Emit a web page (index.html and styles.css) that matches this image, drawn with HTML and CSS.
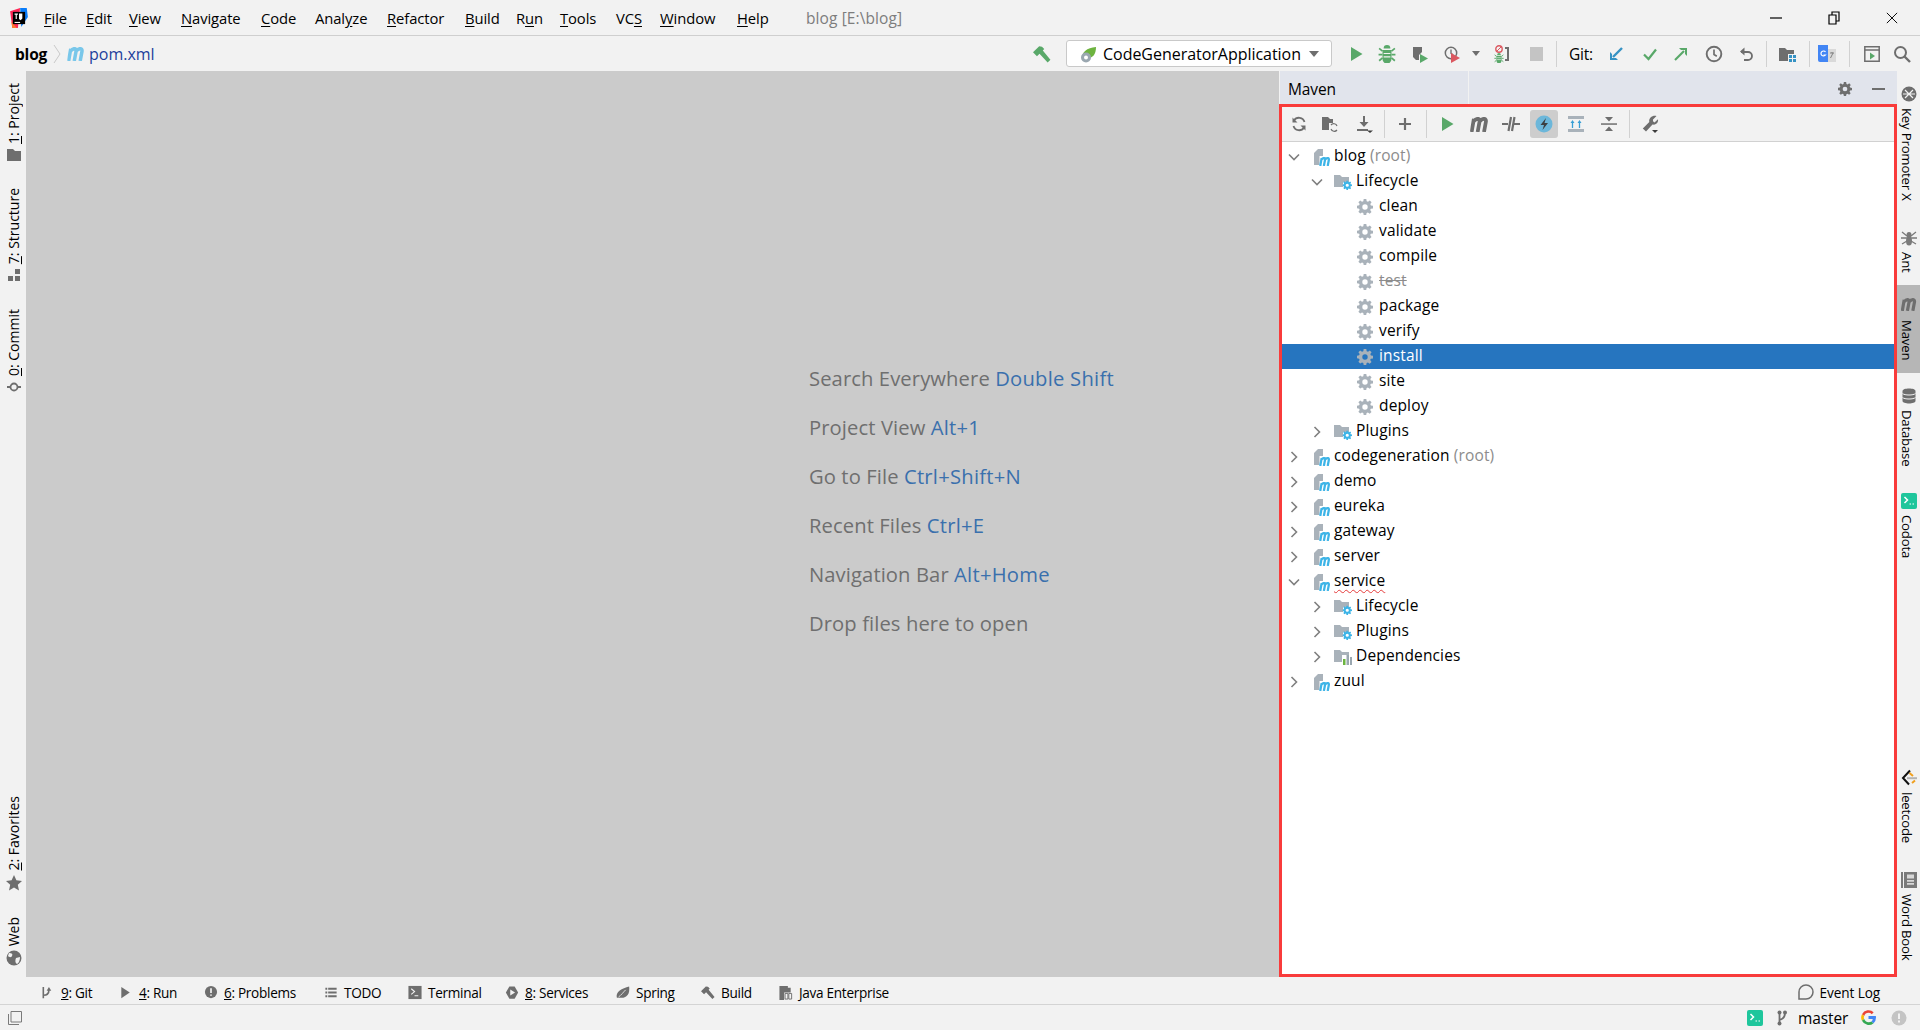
FILE: index.html
```html
<!DOCTYPE html>
<html lang="en">
<head>
<meta charset="utf-8">
<title>blog [E:\blog]</title>
<link rel="stylesheet" href="styles.css">
</head>
<body>
<svg class="sprite" aria-hidden="true">
  <symbol id="mm" viewBox="0 0 10 8"><path d="M.8 8 2 1M1.800 2.400C3.500.4 5.400.5 5 2.600L4 8M5 2.400C6.700.4 8.800.5 8.400 2.600L7.400 8" fill="none" stroke="currentColor" stroke-width="2"/></symbol>
  <symbol id="gear" viewBox="0 0 16 16"><path fill="currentColor" fill-rule="evenodd" d="M6.700 0h2.600l.4 2.200 1.300.6L12.800 1.500l1.800 1.800-1.300 1.800.6 1.300 2.100.4v2.600l-2.200.4-.6 1.300 1.300 1.800-1.800 1.800-1.800-1.300-1.300.6-.4 2.100H6.700l-.4-2.200-1.300-.5-1.800 1.200-1.800-1.800 1.300-1.800-.6-1.300L0 9.300V6.700l2.100-.4.6-1.300-1.300-1.800 1.800-1.800L5 2.800l1.300-.6zM8 5.300a2.700 2.700 0 1 0 0 5.400 2.700 2.700 0 0 0 0-5.400z"/></symbol>
  <symbol id="module" viewBox="0 0 18 18"><path fill="#a9b2ba" d="M1 5 5 1h5v7H6.500v9H1z"/><use href="#mm" x="6" y="9" width="12" height="9" color="#3db4e7"/></symbol>
  <symbol id="life" viewBox="0 0 18 18"><path fill="#a9b2ba" d="M0 2h6l2 2h7v5H9v5H0z"/><use href="#gear" x="8.500" y="7.500" width="9.500" height="9.500" color="#3db4e7"/></symbol>
  <symbol id="deps" viewBox="0 0 18 18"><path fill="#a9b2ba" d="M0 2h6l2 2h7v3H8v7H0z"/><path fill="#6bb53f" d="M9 11h2.500v6H9z"/><path fill="#9aa7b0" d="M12.500 7H15v10h-2.500zM16 9h2v8h-2z"/></symbol>
  <symbol id="chev-r" viewBox="0 0 12 12"><path d="M3.500 1 8.500 6l-5 5" fill="none" stroke="#7f7f7f" stroke-width="1.600"/></symbol>
  <symbol id="chev-d" viewBox="0 0 12 12"><path d="M1 3.500 6 8.500l5-5" fill="none" stroke="#7f7f7f" stroke-width="1.600"/></symbol>
  <symbol id="play" viewBox="0 0 16 16"><path fill="currentColor" d="M3 1 14.500 8 3 15z"/></symbol>
  <symbol id="bug" viewBox="0 0 16 16"><path fill="currentColor" d="M5 3a3 3 0 0 1 6 0zM4 4.500h8v8a4 4 0 0 1-8 0z"/><path d="M1 3l3 2.500M15 3l-3 2.500M.5 8.500H4M15.500 8.500H12M1 14l3-2.500M15 14l-3-2.500" stroke="currentColor" stroke-width="1.500"/><path d="M5 7.500h6M5 10.500h6" stroke="#f2f2f2"/></symbol>
  <symbol id="hammer" viewBox="0 0 16 16"><path fill="currentColor" d="M0 6.500 5.500 1l2.500.5 2 2-1.300 1.300L15.500 13 13 15.500 5.800 7.700 3.500 10z"/></symbol>
  <symbol id="clock" viewBox="0 0 16 16"><circle cx="8" cy="8" r="6.500" fill="none" stroke="currentColor" stroke-width="1.700"/><path d="M8 4v4.500l2.500 1.500" fill="none" stroke="currentColor" stroke-width="1.500"/></symbol>
</svg>

<header class="titlebar">
  <svg class="logo" viewBox="0 0 16 18" aria-hidden="true"><path fill="#fe2857" d="M0 3 9 0l-2 18H2z"/><path fill="#fe7a2e" d="M1 12l5 6H2z"/><path fill="#087cfa" d="M9 0h6l1 8-6 9z"/><path d="M2.500 3.500h11v11h-11z" fill="#000"/><path d="M4 12.500h5v1H4z" fill="#fff"/><path d="M4 5h3v1H6v4H5V6H4zM8 5h3v4.500L9.500 11 8 10z" fill="#fff"/></svg>
  <nav class="menu">
    <span><u>F</u>ile</span><span><u>E</u>dit</span><span><u>V</u>iew</span><span><u>N</u>avigate</span><span><u>C</u>ode</span><span>Anal<u>y</u>ze</span><span><u>R</u>efactor</span><span><u>B</u>uild</span><span>R<u>u</u>n</span><span><u>T</u>ools</span><span>VC<u>S</u></span><span><u>W</u>indow</span><span><u>H</u>elp</span>
  </nav>
  <span class="wintitle">blog [E:\blog]</span>
  <div class="winctl">
    <svg viewBox="0 0 12 12" aria-hidden="true"><path d="M0 6h12" stroke="#000" stroke-width="1.200"/></svg>
    <svg viewBox="0 0 12 14" aria-hidden="true"><path d="M1 4h7v9H1zM4 4V1h7v9H8" fill="none" stroke="#000" stroke-width="1.200"/></svg>
    <svg viewBox="0 0 14 14" aria-hidden="true"><path d="M1 1l12 12M13 1 1 13" stroke="#000" stroke-width="1.100"/></svg>
  </div>
</header>

<div class="navbar">
  <div class="crumbs">
    <b class="crumb-root">blog</b>
    <svg class="crumb-sep" viewBox="0 0 8 20" aria-hidden="true"><path d="M1 1l6 9-6 9" fill="none" stroke="#c9c9c9"/></svg>
    <svg class="crumb-m" viewBox="0 0 10 8" aria-hidden="true"><use href="#mm"/></svg>
    <span class="crumb-file">pom.xml</span>
  </div>
  <div class="tools">
    <span class="cell hammer-cell"><svg class="ic18 green" viewBox="0 0 16 16" aria-hidden="true"><use href="#hammer"/></svg></span>
    <div class="combo">
      <svg class="combo-ic" viewBox="0 0 18 18" aria-hidden="true"><path fill="#6db33f" d="M3 13C1 7 7 3 16 2c0 7-3 11-8 11z"/><circle cx="6" cy="12.500" r="5" fill="#9aa7b0"/><circle cx="6" cy="12.500" r="2" fill="#fff"/></svg>
      <span class="combo-text">CodeGeneratorApplication</span>
      <svg class="caret" viewBox="0 0 10 6" aria-hidden="true"><path d="M0 0h10L5 6z" fill="#6e6e6e"/></svg>
    </div>
    <div class="iconrow">
      <span class="cell"><svg class="ic16 green" viewBox="0 0 16 16" aria-hidden="true"><use href="#play"/></svg></span>
      <span class="cell"><svg class="ic18 green" viewBox="0 0 16 16" aria-hidden="true"><use href="#bug"/></svg></span>
      <span class="cell"><svg class="ic18" viewBox="0 0 18 18" aria-hidden="true"><path d="M2 2h9v5l-3 3v5H5l-3-3z" fill="#6e6e6e"/><path d="M9 9l8 4.500-8 4.500z" fill="#59a869"/></svg></span>
      <span class="cell"><svg class="ic18" viewBox="0 0 18 18" aria-hidden="true"><use href="#clock" width="14" height="14" color="#6e6e6e" x="0" y="1"/><path d="M7 8l9 5-9 5z" fill="#db5860"/></svg></span>
      <span class="cell"><svg class="mini" viewBox="0 0 8 5" aria-hidden="true"><path d="M0 0h8L4 5z" fill="#6e6e6e"/></svg></span>
      <span class="cell"><svg class="ic18" viewBox="0 0 18 18" aria-hidden="true"><circle cx="6" cy="4" r="3.200" fill="none" stroke="#db5860" stroke-width="1.400"/><path d="M4 6l4-4" stroke="#db5860"/><use href="#bug" x="1" y="8" width="10" height="10" color="#59a869"/><path d="M12 2h4v14h-4v-2h2V4h-2z" fill="#6e6e6e"/></svg></span>
      <span class="cell"><i class="stop"></i></span>
      <span class="cell"><i class="vsep"></i></span>
      <span class="gitlabel">Git:</span>
      <span class="cell"><svg class="ic16" viewBox="0 0 16 16" aria-hidden="true"><path d="M14 2 5 11" stroke="#3592c4" stroke-width="2.400"/><path d="M2 6v8h8l-2-2H4V8z" fill="#3592c4"/></svg></span>
      <span class="cell"><svg class="ic16" viewBox="0 0 16 16" aria-hidden="true"><path d="M2 8.500 6.500 13 14 3.500" fill="none" stroke="#59a869" stroke-width="2.200"/></svg></span>
      <span class="cell"><svg class="ic16" viewBox="0 0 16 16" aria-hidden="true"><path d="M2 14 11 5" stroke="#59a869" stroke-width="2.200"/><path d="M6 2h8v8l-2-2V4H8z" fill="#59a869"/></svg></span>
      <span class="cell"><svg class="ic18 grey" viewBox="0 0 16 16" aria-hidden="true"><use href="#clock"/></svg></span>
      <span class="cell"><svg class="ic16" viewBox="0 0 16 16" aria-hidden="true"><path d="M3 6h7a3.500 3.500 0 0 1 0 8H6" fill="none" stroke="#6e6e6e" stroke-width="1.800"/><path d="M6.500 1.500v8L2 5.500z" fill="#6e6e6e"/></svg></span>
      <span class="cell"><i class="vsep"></i></span>
      <span class="cell"><svg class="ic18" viewBox="0 0 18 18" aria-hidden="true"><path d="M0 3h6l2 2h7v4H9v7H0z" fill="#6e6e6e"/><path d="M10 10h3v3h-3zM14 10h3v3h-3zM10 14h3v3h-3zM14 14h3v3h-3z" fill="#3592c4"/></svg></span>
      <span class="cell"><i class="vsep"></i></span>
      <span class="cell"><svg class="ic20" viewBox="0 0 20 20" aria-hidden="true"><path d="M1 1h10v17H3a2 2 0 0 1-2-2z" fill="#4285f4"/><path d="M11 5h8v13h-8z" fill="#d9d9d9"/><path d="M8.500 8A2.500 2.500 0 1 0 8.500 11H6.500" fill="none" stroke="#fff" stroke-width="1.200"/><path d="M13 9h4M15 8v1M13.500 14l2.500-5" stroke="#808080"/></svg></span>
      <span class="cell"><i class="vsep"></i></span>
      <span class="cell"><svg class="ic18" viewBox="0 0 18 18" aria-hidden="true"><path d="M1.800 1.800h14.400v14.400H1.800z" fill="none" stroke="#6e6e6e" stroke-width="1.500"/><path d="M1.800 5h14.400" stroke="#6e6e6e" stroke-width="1.500"/><path d="M7 7.500l5 3.500-5 3.500z" fill="#59a869"/></svg></span>
      <span class="cell"><svg class="ic18" viewBox="0 0 18 18" aria-hidden="true"><circle cx="7.500" cy="7.500" r="5.500" fill="none" stroke="#6e6e6e" stroke-width="2"/><path d="M11.500 11.500 17 17" stroke="#6e6e6e" stroke-width="2.400"/></svg></span>
    </div>
  </div>
</div>

<main class="main">
  <aside class="lstripe">
    <div class="lgroup-top">
      <div class="lbtn"><svg class="ic14" viewBox="0 0 14 14" aria-hidden="true"><path d="M0 1h6l2 2h6v10H0z" fill="#6e6e6e"/></svg><span class="vt"><u>1</u>: Project</span></div>
      <div class="lbtn"><svg class="ic14" viewBox="0 0 14 14" aria-hidden="true"><path d="M8 1h5v5H8zM1 8h5v5H1zM8 8h5v5H8z" fill="#6e6e6e"/></svg><span class="vt"><u>7</u>: Structure</span></div>
      <div class="lbtn"><svg class="ic14" viewBox="0 0 14 14" aria-hidden="true"><circle cx="7" cy="7" r="3.500" fill="none" stroke="#6e6e6e" stroke-width="1.800"/><path d="M0 7h3.500M10.500 7H14" stroke="#6e6e6e" stroke-width="1.800"/></svg><span class="vt"><u>0</u>: Commit</span></div>
    </div>
    <div class="lgroup-bot">
      <div class="lbtn"><svg class="ic16" viewBox="0 0 16 16" aria-hidden="true"><path d="M8 0l2.400 5.300 5.600.6-4.200 3.800 1.200 5.700L8 12.500 3 15.400l1.200-5.700L0 5.900l5.600-.6z" fill="#6e6e6e"/></svg><span class="vt"><u>2</u>: Favorites</span></div>
      <div class="lbtn"><svg class="ic16" viewBox="0 0 16 16" aria-hidden="true"><circle cx="8" cy="8" r="7.500" fill="#6e6e6e"/><path d="M3 3c3 0 4 1 3 3S3 7 2 6zM10 8l4-1c0 3-1 6-3 7-2-1-2-4-1-6z" fill="#f2f2f2"/></svg><span class="vt">Web</span></div>
    </div>
  </aside>

  <section class="editor">
    <p class="hint">Search Everywhere <em>Double Shift</em></p>
    <p class="hint">Project View <em>Alt+1</em></p>
    <p class="hint">Go to File <em>Ctrl+Shift+N</em></p>
    <p class="hint">Recent Files <em>Ctrl+E</em></p>
    <p class="hint">Navigation Bar <em>Alt+Home</em></p>
    <p class="hint">Drop files here to open</p>
  </section>

  <section class="panel">
    <div class="panel-head">
      <span class="panel-title">Maven</span>
      <svg class="head-gear" viewBox="0 0 16 16" aria-hidden="true"><use href="#gear"/></svg>
      <i class="head-min"></i>
    </div>
    <div class="panel-box">
      <div class="mvn-tools">
        <span class="cell"><svg class="ic16" viewBox="0 0 16 16" aria-hidden="true"><path d="M13.500 6A5.800 5.800 0 0 0 3 4.500M2.500 10A5.800 5.800 0 0 0 13 11.500" fill="none" stroke="#6e6e6e" stroke-width="1.800"/><path d="M1.500 1.500v5h5zM14.500 14.500v-5h-5z" fill="#6e6e6e"/></svg></span>
        <span class="cell"><svg class="ic18" viewBox="0 0 18 18" aria-hidden="true"><path d="M1 2h6l2 2h3v4H8v7H1z" fill="#6e6e6e"/><path d="M16 11a3.500 3.500 0 0 0-6-1M10 14a3.500 3.500 0 0 0 6 1" fill="none" stroke="#6e6e6e" stroke-width="1.200"/></svg></span>
        <span class="cell"><svg class="ic18" viewBox="0 0 18 18" aria-hidden="true"><path d="M8 1v9" stroke="#6e6e6e" stroke-width="2"/><path d="M3.500 7h9L8 12zM1 14h11v2H1z" fill="#6e6e6e"/><path d="M11 15.500h6l-3 2.500z" fill="#3c3c3c"/></svg></span>
        <span class="cell"><i class="vsep tall"></i></span>
        <span class="cell"><svg class="ic14" viewBox="0 0 14 14" aria-hidden="true"><path d="M7 1v12M1 7h12" stroke="#6e6e6e" stroke-width="2.200"/></svg></span>
        <span class="cell"><i class="vsep tall"></i></span>
        <span class="cell"><svg class="ic16 green" viewBox="0 0 16 16" aria-hidden="true"><use href="#play"/></svg></span>
        <span class="cell"><svg class="mbig" viewBox="0 0 10 8" aria-hidden="true"><use href="#mm"/></svg></span>
        <span class="cell"><svg class="ic18" viewBox="0 0 18 18" aria-hidden="true"><path d="M0 9h6M12 9h6" stroke="#6e6e6e" stroke-width="2"/><path d="M6.500 16 9 2M10 16l2.500-14" stroke="#6e6e6e" stroke-width="2.200"/></svg></span>
        <span class="cell on"><svg class="ic18" viewBox="0 0 18 18" aria-hidden="true"><circle cx="9" cy="9" r="8.500" fill="#6cb7da"/><path d="M11 3 5.500 10H9l-1.500 5L13 8H9.500z" fill="#3c3f41"/></svg></span>
        <span class="cell"><svg class="ic18" viewBox="0 0 18 18" aria-hidden="true"><path d="M1 1h16v3H1zM1 14h16v3H1z" fill="#a9b2ba"/><path d="M5.500 13V7M12.500 13V7" stroke="#389fd6" stroke-width="1.300"/><path d="M3.500 8l2-3 2 3zM10.500 8l2-3 2 3z" fill="#389fd6"/></svg></span>
        <span class="cell"><svg class="ic16" viewBox="0 0 16 16" aria-hidden="true"><path d="M0 7.300h16v1.500H0z" fill="#6e6e6e"/><path d="M4 1h8L8 5.500zM8 10.500l4 4.500H4z" fill="#6e6e6e"/></svg></span>
        <span class="cell"><i class="vsep tall"></i></span>
        <span class="cell"><svg class="ic18" viewBox="0 0 18 18" aria-hidden="true"><path d="M15.500 1 12 4.500v1.800l1.500 1.200 3.500-3.200c.5 3-1.500 6-5.500 5.200L5 16.500 1.800 13.500 8.300 7C7.500 3 11.500 0 15.500 1z" fill="#6e6e6e"/><path d="M11 15h6l-3 3z" fill="#3c3c3c"/></svg></span>
      </div>
      <div class="tree">
        <div class="row d0"><svg class="chev" viewBox="0 0 12 12" aria-hidden="true"><use href="#chev-d"/></svg><svg class="ti mod" viewBox="0 0 18 18" aria-hidden="true"><use href="#module"/></svg><span>blog <span class="root">(root)</span></span></div>
        <div class="row d1"><svg class="chev" viewBox="0 0 12 12" aria-hidden="true"><use href="#chev-d"/></svg><svg class="ti fold" viewBox="0 0 18 18" aria-hidden="true"><use href="#life"/></svg><span>Lifecycle</span></div>
        <div class="row d2"><svg class="ti goal" viewBox="0 0 16 16" aria-hidden="true"><use href="#gear"/></svg><span>clean</span></div>
        <div class="row d2"><svg class="ti goal" viewBox="0 0 16 16" aria-hidden="true"><use href="#gear"/></svg><span>validate</span></div>
        <div class="row d2"><svg class="ti goal" viewBox="0 0 16 16" aria-hidden="true"><use href="#gear"/></svg><span>compile</span></div>
        <div class="row d2"><svg class="ti goal" viewBox="0 0 16 16" aria-hidden="true"><use href="#gear"/></svg><span class="skip">test</span></div>
        <div class="row d2"><svg class="ti goal" viewBox="0 0 16 16" aria-hidden="true"><use href="#gear"/></svg><span>package</span></div>
        <div class="row d2"><svg class="ti goal" viewBox="0 0 16 16" aria-hidden="true"><use href="#gear"/></svg><span>verify</span></div>
        <div class="row d2 selected"><svg class="ti goal" viewBox="0 0 16 16" aria-hidden="true"><use href="#gear"/></svg><span>install</span></div>
        <div class="row d2"><svg class="ti goal" viewBox="0 0 16 16" aria-hidden="true"><use href="#gear"/></svg><span>site</span></div>
        <div class="row d2"><svg class="ti goal" viewBox="0 0 16 16" aria-hidden="true"><use href="#gear"/></svg><span>deploy</span></div>
        <div class="row d1"><svg class="chev" viewBox="0 0 12 12" aria-hidden="true"><use href="#chev-r"/></svg><svg class="ti fold" viewBox="0 0 18 18" aria-hidden="true"><use href="#life"/></svg><span>Plugins</span></div>
        <div class="row d0"><svg class="chev" viewBox="0 0 12 12" aria-hidden="true"><use href="#chev-r"/></svg><svg class="ti mod" viewBox="0 0 18 18" aria-hidden="true"><use href="#module"/></svg><span>codegeneration <span class="root">(root)</span></span></div>
        <div class="row d0"><svg class="chev" viewBox="0 0 12 12" aria-hidden="true"><use href="#chev-r"/></svg><svg class="ti mod" viewBox="0 0 18 18" aria-hidden="true"><use href="#module"/></svg><span>demo</span></div>
        <div class="row d0"><svg class="chev" viewBox="0 0 12 12" aria-hidden="true"><use href="#chev-r"/></svg><svg class="ti mod" viewBox="0 0 18 18" aria-hidden="true"><use href="#module"/></svg><span>eureka</span></div>
        <div class="row d0"><svg class="chev" viewBox="0 0 12 12" aria-hidden="true"><use href="#chev-r"/></svg><svg class="ti mod" viewBox="0 0 18 18" aria-hidden="true"><use href="#module"/></svg><span>gateway</span></div>
        <div class="row d0"><svg class="chev" viewBox="0 0 12 12" aria-hidden="true"><use href="#chev-r"/></svg><svg class="ti mod" viewBox="0 0 18 18" aria-hidden="true"><use href="#module"/></svg><span>server</span></div>
        <div class="row d0"><svg class="chev" viewBox="0 0 12 12" aria-hidden="true"><use href="#chev-d"/></svg><svg class="ti mod" viewBox="0 0 18 18" aria-hidden="true"><use href="#module"/></svg><span class="squiggle">service</span></div>
        <div class="row d1"><svg class="chev" viewBox="0 0 12 12" aria-hidden="true"><use href="#chev-r"/></svg><svg class="ti fold" viewBox="0 0 18 18" aria-hidden="true"><use href="#life"/></svg><span>Lifecycle</span></div>
        <div class="row d1"><svg class="chev" viewBox="0 0 12 12" aria-hidden="true"><use href="#chev-r"/></svg><svg class="ti fold" viewBox="0 0 18 18" aria-hidden="true"><use href="#life"/></svg><span>Plugins</span></div>
        <div class="row d1"><svg class="chev" viewBox="0 0 12 12" aria-hidden="true"><use href="#chev-r"/></svg><svg class="ti fold" viewBox="0 0 18 18" aria-hidden="true"><use href="#deps"/></svg><span>Dependencies</span></div>
        <div class="row d0"><svg class="chev" viewBox="0 0 12 12" aria-hidden="true"><use href="#chev-r"/></svg><svg class="ti mod" viewBox="0 0 18 18" aria-hidden="true"><use href="#module"/></svg><span>zuul</span></div>
      </div>
    </div>
  </section>

  <aside class="rstripe">
    <div class="rgroup-top">
      <div class="rbtn"><svg class="ic16" viewBox="0 0 16 16" aria-hidden="true"><circle cx="8" cy="8" r="7.500" fill="#6e6e6e"/><path d="M4 4l8 8M12 4l-8 8M2 8h12" stroke="#f2f2f2" stroke-width="1.200"/></svg><span class="vr">Key Promoter X</span></div>
      <div class="rbtn"><svg class="ic16" viewBox="0 0 16 16" aria-hidden="true"><ellipse cx="8" cy="5" rx="2.500" ry="3" fill="#7a7a7a"/><ellipse cx="8" cy="11" rx="3" ry="4.500" fill="#7a7a7a"/><path d="M1 2l5 4M15 2l-5 4M0 8h16M1 14l5-3M15 14l-5-3" stroke="#7a7a7a" stroke-width="1.300"/></svg><span class="vr">Ant</span></div>
      <div class="rbtn active"><svg class="mstripe" viewBox="0 0 10 8" aria-hidden="true"><use href="#mm"/></svg><span class="vr">Maven</span></div>
      <div class="rbtn db"><svg class="ic16" viewBox="0 0 16 16" aria-hidden="true"><path d="M1.500 3c0-3.300 13-3.300 13 0v10c0 3.300-13 3.300-13 0z" fill="#6e6e6e"/><path d="M1.500 5.500c2 2 11 2 13 0M1.500 9.500c2 2 11 2 13 0" fill="none" stroke="#f2f2f2"/></svg><span class="vr">Database</span></div>
      <div class="rbtn"><svg class="ic16" viewBox="0 0 16 16" aria-hidden="true"><rect width="16" height="16" rx="2" fill="#1fc69c"/><path d="M3.500 4l3 3-3 3" fill="none" stroke="#fff" stroke-width="1.500"/><path d="M8.500 11h1.500M11.500 11H13" stroke="#fff" stroke-width="1.200"/></svg><span class="vr">Codota</span></div>
    </div>
    <div class="rgroup-bot">
      <div class="rbtn"><svg class="ic16" viewBox="0 0 16 16" aria-hidden="true"><path d="M9 .5 2 8l6 6.500" fill="none" stroke="#111" stroke-width="2"/><path d="M6 8.200h10" stroke="#b3b3b3" stroke-width="2"/><path d="M8.500 3l3.500 3M11 13l3-2.500" stroke="#f0a020" stroke-width="2"/></svg><span class="vr">leetcode</span></div>
      <div class="rbtn"><svg class="ic16" viewBox="0 0 16 16" aria-hidden="true"><path d="M0 0h2v16H0zM3 0h13v16H3z" fill="#7a7a7a"/><path d="M6 2.500h7v4H6zM6 8h7v1.800H6zM6 11h7v1.800H6z" fill="#d8d8d8"/></svg><span class="vr">Word Book</span></div>
    </div>
  </aside>
</main>

<div class="toolwin">
  <div class="toolwin-items">
    <div class="tw"><svg viewBox="0 0 14 16" aria-hidden="true"><path d="M2 2v12M2 11c4 0 6-2 6-6" fill="none" stroke="#6e6e6e" stroke-width="1.700"/><path d="M5.500 6 8 2l2.500 4z" fill="#6e6e6e"/></svg><span><u>9</u>: Git</span></div>
    <div class="tw"><svg viewBox="0 0 14 16" aria-hidden="true"><path d="M2 2l9 6-9 6z" fill="#6e6e6e"/></svg><span><u>4</u>: Run</span></div>
    <div class="tw"><svg viewBox="0 0 14 16" aria-hidden="true"><circle cx="7" cy="7.500" r="6.500" fill="#6e6e6e"/><path d="M7 3.500v5M7 10v1.500" stroke="#f2f2f2" stroke-width="1.800"/></svg><span><u>6</u>: Problems</span></div>
    <div class="tw"><svg viewBox="0 0 14 16" aria-hidden="true"><path d="M1 3h2v2H1zM4 3h9v2H4zM1 7h2v2H1zM4 7h9v2H4zM1 11h2v2H1zM4 11h9v2H4z" fill="#6e6e6e"/></svg><span>TODO</span></div>
    <div class="tw"><svg viewBox="0 0 14 16" aria-hidden="true"><path d="M0 1h14v14H0z" fill="#6e6e6e"/><path d="M3 4l3.500 3L3 10M6.500 11.500h4" fill="none" stroke="#f2f2f2" stroke-width="1.200"/></svg><span>Terminal</span></div>
    <div class="tw"><svg viewBox="0 0 16 16" aria-hidden="true"><path d="M5 1h6l4 7-4 7H5L1 8z" fill="#6e6e6e"/><path d="M6 4.500l5.500 3.500L6 11.500z" fill="#f2f2f2"/></svg><span><u>8</u>: Services</span></div>
    <div class="tw"><svg viewBox="0 0 16 16" aria-hidden="true"><path d="M1 14C-1 7 7 3 15 1c1 8-2 13-9 13z" fill="#6e6e6e"/><path d="M3 13c3-2 5-5 8-8" stroke="#f2f2f2"/></svg><span>Spring</span></div>
    <div class="tw"><svg viewBox="0 0 16 16" aria-hidden="true"><use href="#hammer" color="#6e6e6e"/></svg><span>Build</span></div>
    <div class="tw"><svg viewBox="0 0 14 16" aria-hidden="true"><path d="M0 1h9v2h3v13H0z" fill="#6e6e6e"/><path d="M5 8h8v8H5z" fill="#f2f2f2"/><path d="M6 9h3v6H6zM10 9h3v6h-3z" fill="none" stroke="#6e6e6e"/></svg><span>Java Enterprise</span></div>
  </div>
  <div class="eventlog"><svg viewBox="0 0 16 16" aria-hidden="true"><path d="M8 1a7 7 0 0 1 0 14H1V8a7 7 0 0 1 7-7z" fill="none" stroke="#6e6e6e" stroke-width="1.500"/></svg><span>Event Log</span></div>
</div>

<footer class="status">
  <svg class="st-left" viewBox="0 0 14 14" aria-hidden="true"><path d="M3 .5h10.500V11H3zM.5 3v10.500H11" fill="none" stroke="#7a7a7a"/></svg>
  <div class="st-right">
    <svg class="ic16" viewBox="0 0 16 16" aria-hidden="true"><rect width="16" height="16" rx="2" fill="#1fc69c"/><path d="M3.500 4l3 3-3 3" fill="none" stroke="#fff" stroke-width="1.500"/><path d="M8.500 11h1.500M11.500 11H13" stroke="#fff" stroke-width="1.200"/></svg>
    <svg class="branch" viewBox="0 0 10 16" aria-hidden="true"><path d="M2.500 2v12M2.500 10C6 9 8 7 8 3" fill="none" stroke="#6e6e6e" stroke-width="1.800"/><circle cx="2.500" cy="2.500" r="2" fill="#6e6e6e"/><circle cx="2.500" cy="13.500" r="2" fill="#6e6e6e"/><circle cx="8" cy="2.500" r="2" fill="#6e6e6e"/></svg>
    <span class="branchname">master</span>
    <svg class="gicon" viewBox="0 0 16 16" aria-hidden="true"><path d="M8 3a5 5 0 0 1 3.500 1.400l2-2A8 8 0 0 0 1 4.500l2.400 1.800A5 5 0 0 1 8 3z" fill="#ea4335"/><path d="M3 8c0-.6.100-1.200.4-1.700L1 4.500a8 8 0 0 0 0 7l2.400-1.800A5 5 0 0 1 3 8z" fill="#fbbc05"/><path d="M8 13a5 5 0 0 1-4.600-3.300L1 11.500A8 8 0 0 0 13.400 14l-2.300-1.800A5 5 0 0 1 8 13z" fill="#34a853"/><path d="M16 8c0-.5 0-1-.2-1.500H8v3h4.500a4 4 0 0 1-1.400 2.700l2.300 1.800A8 8 0 0 0 16 8z" fill="#4285f4"/></svg>
    <svg class="ic16" viewBox="0 0 16 16" aria-hidden="true"><circle cx="8" cy="8" r="7.500" fill="#c4c4c4"/><path d="M8 3.500v5.500M8 10.500v2" stroke="#f2f2f2" stroke-width="2"/></svg>
  </div>
</footer>
</body>
</html>
```

FILE: styles.css
```css
* { box-sizing: border-box; }
html, body { height: 100%; }
body {
  margin: 0;
  height: 1030px;
  display: flex;
  flex-direction: column;
  overflow: hidden;
  background: #f2f2f2;
  color: #000;
  font-family: "Open Sans", "Noto Sans", "Liberation Sans", sans-serif;
  font-size: 14px;
}
.sprite { width: 0; height: 0; position: absolute; }
svg { display: block; flex: none; overflow: visible; }
.ic14 { width: 14px; height: 14px; }
.ic16 { width: 16px; height: 16px; }
.ic18 { width: 18px; height: 18px; }
.ic20 { width: 20px; height: 20px; }
.green { color: #59a869; }
.grey { color: #6e6e6e; }
.cell { display: flex; align-items: center; justify-content: center; min-width: 0; }
.vsep { display: block; width: 1px; height: 26px; background: #d1d1d1; }
.vsep.tall { height: 28px; }

/* title bar */
.titlebar {
  height: 36px;
  flex: none;
  display: flex;
  align-items: center;
  border-bottom: 1px solid #cfcfcf;
  padding-left: 10px;
}
.logo { width: 18px; height: 20px; margin-right: 16px; }
.menu {
  display: grid;
  grid-template-columns: 42px 43px 52px 80px 54px 72px 78px 51px 44px 56px 44px 77px 69px;
  letter-spacing: -.1px;
  white-space: nowrap;
  font-size: 14.8px;
}
.menu u { text-underline-offset: 2px; }
.wintitle { color: #7d7d7d; font-size: 15.5px; letter-spacing: .1px; }
.winctl {
  margin-left: auto;
  display: grid;
  grid-template-columns: 58px 58px 58px;
  justify-items: center;
  margin-right: -1px;
}
.winctl svg { width: 12px; height: 14px; }

/* nav bar */
.navbar {
  height: 35px;
  flex: none;
  display: flex;
  align-items: center;
  justify-content: space-between;
  padding-left: 15px;
}
.crumbs { display: flex; align-items: center; }
.crumb-root { font-weight: 700; font-size: 15.5px; letter-spacing: -.2px; width: 37px; }
.crumb-sep { width: 8px; height: 20px; margin-left: 1px; }
.crumb-m { width: 18px; height: 14px; color: #79c7ea; margin-left: 6px; margin-right: 4px; }
.crumb-file { color: #1d3f9c; font-size: 16px; letter-spacing: 0; }
.tools { display: flex; align-items: center; }
.hammer-cell { width: 28px; margin-right: 10px; }
.combo {
  width: 266px;
  height: 27px;
  display: flex;
  align-items: center;
  background: #fff;
  border: 1px solid #c9c9c9;
  border-radius: 3px;
  padding-left: 13px;
  margin-right: 8px;
}
.combo-ic { width: 18px; height: 18px; }
.combo-text { margin-left: 5px; font-size: 16px; letter-spacing: -.03px; width: 201px; white-space: nowrap; }
.caret { width: 10px; height: 6px; margin-left: 5px; }
.iconrow {
  display: grid;
  grid-template-columns: 32px 30px 36px 30px 16px 36px 32px 8px 40px 32px 36px 26px 40px 24px 16px 28px 14px 22px 22px 24px 36px;
  align-items: center;
}
.mini { width: 8px; height: 5px; }
.stop { display: block; width: 13px; height: 14px; background: #c4c4c4; }
.gitlabel { padding-left: 9px; font-size: 15.5px; letter-spacing: -.2px; }

/* main */
.main { flex: none; height: 906px; display: flex; }
.lstripe {
  width: 26px;
  flex: none;
  display: flex;
  flex-direction: column;
  justify-content: space-between;
  padding-left: 2px;
  padding-bottom: 5px;
}
.lgroup-top { display: grid; grid-template-rows: 97px 120px 112px; }
.lgroup-bot { display: grid; grid-template-rows: 96px 75px; }
.lbtn {
  display: flex;
  flex-direction: column-reverse;
  align-items: center;
  gap: 4px;
  padding-bottom: 6px;
}
.vt {
  writing-mode: vertical-rl;
  transform: rotate(180deg);
  font-size: 14px;
  letter-spacing: 0;
  line-height: 16px;
  white-space: nowrap;
}
.editor {
  flex: 1;
  background: #cbcbcb;
  padding: 285px 0 0 783px;
  font-size: 20.2px;
  color: #6f6f6f;
  min-width: 0;
}
.hint { margin: 0; height: 49px; line-height: 44px; white-space: nowrap; letter-spacing: .1px; }
.hint em { font-style: normal; color: #3a70ad; letter-spacing: .25px; }

/* maven panel */
.panel { width: 618px; flex: none; display: flex; flex-direction: column; }
.panel-head {
  height: 33px;
  flex: none;
  display: flex;
  align-items: center;
  background: #e1e4ec;
  margin-left: 1px;
}
.panel-title {
  width: 189px;
  height: 33px;
  line-height: 36px;
  padding-left: 8px;
  border-right: 1px solid #f2f2f2;
  font-size: 15.5px;
  letter-spacing: -.1px;
}
.head-gear { width: 14px; height: 14px; color: #6e6e6e; margin-left: 369px; margin-top: 3px; }
.head-min { display: block; width: 13px; height: 2px; background: #6e6e6e; margin-left: 20px; margin-top: 2px; }
.panel-box {
  flex: 1;
  min-height: 0;
  border: 3px solid #f93b3b;
  display: flex;
  flex-direction: column;
  background: #fff;
}
.mvn-tools {
  height: 35px;
  flex: none;
  display: grid;
  grid-template-columns: 26px 36px 34px 4px 38px 4px 38px 26px 38px 28px 36px 30px 10px 32px;
  padding-left: 4px;
  align-items: center;
  background: #f2f2f2;
  border-bottom: 1px solid #d1d1d1;
}
.mvn-tools .cell { height: 28px; }
.cell.on { background: #cdcdcd; border-radius: 3px; }
.mbig { width: 19px; height: 15px; color: #6e6e6e; }
.tree { flex: 1; padding-top: 2px; font-size: 15.5px; letter-spacing: .15px; }
.row { height: 25px; display: flex; align-items: center; white-space: nowrap; }
.row > span { margin-top: -4px; }
.row.d0 { padding-left: 6px; }
.row.d1 { padding-left: 29px; }
.row.d2 { padding-left: 75px; }
.chev { width: 12px; height: 12px; }
.d0 .chev { margin-right: 13px; }
.d1 .chev { margin-right: 11px; }
.ti.mod { width: 18px; height: 18px; margin-right: 3px; }
.ti.fold { width: 18px; height: 18px; margin-right: 4px; }
.ti.goal { width: 16px; height: 16px; margin-right: 6px; color: #a9b2ba; }
.root { color: #8c8c8c; }
.skip { color: #8c8c8c; text-decoration: line-through; }
.squiggle { text-decoration: underline wavy #e53b3b 1px; text-underline-offset: 3px; }
.row.selected { background: #2675bf; color: #fff; }

/* right stripe */
.rstripe {
  width: 23px;
  flex: none;
  display: flex;
  flex-direction: column;
  justify-content: space-between;
  padding-top: 8px;
  padding-bottom: 7px;
}
.rgroup-top { display: grid; grid-template-rows: 144px 62px 88px 113px 70px; }
.rgroup-bot { display: grid; grid-template-rows: 102px 105px; }
.rbtn {
  display: flex;
  flex-direction: column;
  align-items: center;
  gap: 6px;
  padding-top: 7px;
}
.rbtn.active { background: #b6b6b6; padding-top: 13px; gap: 9px; }
.rbtn.db { margin-top: 8px; }
.mstripe { width: 16px; height: 13px; color: #6e6e6e; }
.vr {
  writing-mode: vertical-rl;
  font-size: 13.2px;
  letter-spacing: -.2px;
  line-height: 16px;
  white-space: nowrap;
  margin-right: 4px;
}

/* tool window bar */
.toolwin {
  height: 28px;
  flex: none;
  display: flex;
  align-items: center;
  justify-content: space-between;
  border-bottom: 1px solid #d4d4d4;
  padding: 3px 40px 0 41px;
}
.toolwin-items {
  display: grid;
  grid-template-columns: 78px 85px 120px 84px 97px 111px 85px 78px 120px;
  font-size: 13.6px;
  letter-spacing: -.3px;
}
.tw { display: flex; align-items: center; white-space: nowrap; }
.tw svg { width: 14px; height: 15px; margin-right: 6px; }
.eventlog { display: flex; align-items: center; gap: 6px; font-size: 13.6px; letter-spacing: -.1px; }
.eventlog svg { width: 16px; height: 16px; }

/* status bar */
.status {
  flex: none;
  height: 25px;
  display: flex;
  align-items: center;
  justify-content: space-between;
  padding-left: 8px;
  padding-right: 13px;
}
.st-left { width: 14px; height: 14px; }
.st-right { display: flex; align-items: center; }
.branch { width: 10px; height: 16px; margin-left: 14px; margin-right: 11px; }
.branchname { font-size: 15.5px; width: 48px; margin-right: 15px; letter-spacing: -.1px; white-space: nowrap; }
.gicon { width: 15px; height: 15px; margin-right: 15px; }
```
